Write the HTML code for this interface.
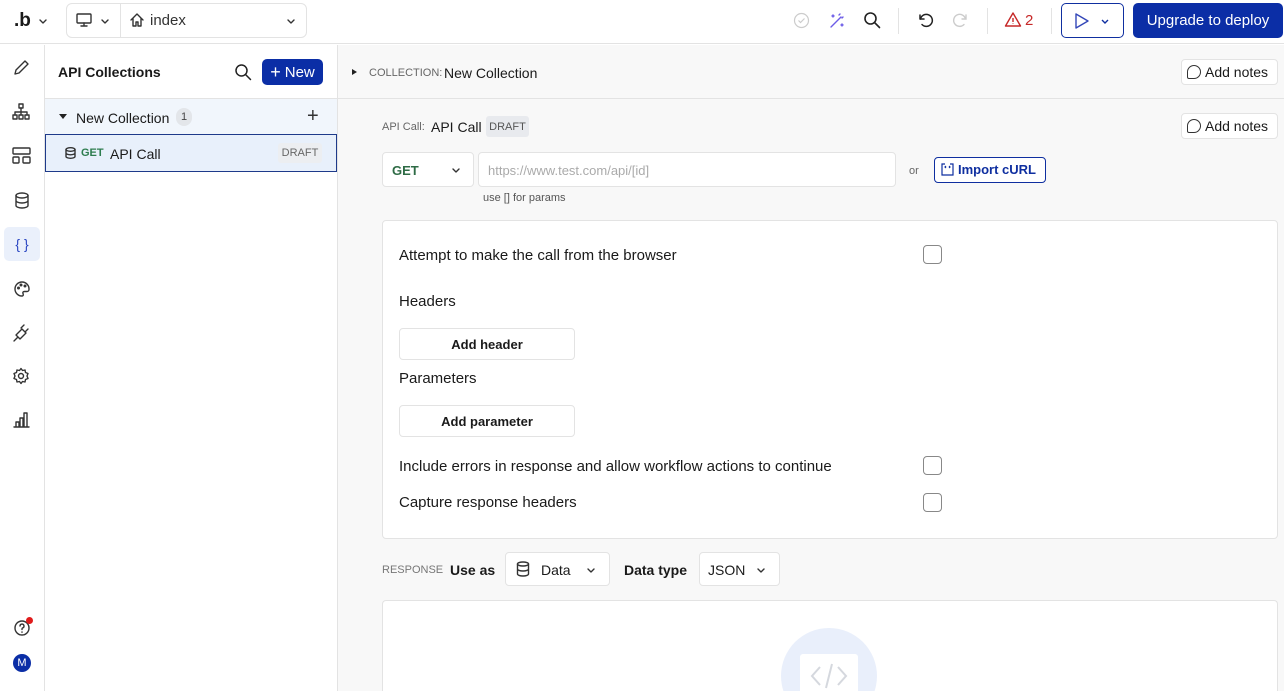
<!DOCTYPE html>
<html style="overflow:hidden;width:1284px;height:691px"><head><meta charset="utf-8"><style>
*{box-sizing:border-box;margin:0;padding:0}
body{width:1284px;height:691px;overflow:hidden;font-family:"Liberation Sans",sans-serif;color:#1a1a1a;background:#fff;position:relative;font-size:14px}
.a{position:absolute}
.top{left:0;top:0;width:1284px;height:44px;border-bottom:1px solid #e3e3e3;background:#fff}
.rail{left:0;top:45px;width:45px;height:646px;border-right:1px solid #e3e3e3;background:#fff}
.side{left:45px;top:45px;width:293px;height:646px;border-right:1px solid #e3e3e3;background:#fff}
.main{left:338px;top:45px;width:946px;height:646px;background:#f8f8f8;overflow:hidden}
.btn{background:#fff;border:1px solid #e3e3e3;border-radius:4px}
.cb{width:19px;height:19px;border:1.5px solid #888;border-radius:4px;background:#fff}
.fc{display:flex;align-items:center;justify-content:center}
svg{display:block}
.ic{stroke:#333;fill:none;stroke-width:1.4;stroke-linecap:round;stroke-linejoin:round}
</style></head><body>
<div class="a top">
 <div class="a" style="left:14px;top:10px;font-size:19px;font-weight:bold">.b</div>
 <svg class="a ic" style="left:38px;top:16px" width="10" height="10"><path d="M2 4l3 3 3-3"/></svg>
 <div class="a btn" style="left:66px;top:3px;width:241px;height:35px;border-radius:6px"></div>
 <div class="a" style="left:120px;top:4px;width:1px;height:33px;background:#e3e3e3"></div>
 <svg class="a ic" style="left:76px;top:13px" width="16" height="14"><rect x="1" y="1" width="14" height="9" rx="1"/><path d="M5 13h6M8 10v3"/></svg>
 <svg class="a ic" style="left:100px;top:16px" width="10" height="10"><path d="M2 4l3 3 3-3"/></svg>
 <svg class="a ic" style="left:129px;top:12px" width="16" height="16"><path d="M2 8l6-6 6 6M4 6v8h3v-4h2v4h3V6"/></svg>
 <div class="a" style="left:150px;top:12px;font-size:15px;color:#333">index</div>
 <svg class="a ic" style="left:286px;top:16px" width="10" height="10"><path d="M2 4l3 3 3-3"/></svg>
 <svg class="a" style="left:793px;top:12px" width="17" height="17"><circle cx="8.5" cy="8.5" r="7" fill="none" stroke="#ccc" stroke-width="1.2"/><path d="M5.5 8.5l2 2 4-4" fill="none" stroke="#ccc" stroke-width="1.2"/></svg>
 <svg class="a" style="left:828px;top:12px" width="18" height="18"><path d="M3 15l10-10M11 3l1-1M14 6l1-1M5 3v2M4 4h2M14 12v2M13 13h2" fill="none" stroke="#6c5ce7" stroke-width="1.4" stroke-linecap="round"/></svg>
 <svg class="a ic" style="left:863px;top:11px" width="18" height="18"><circle cx="7.5" cy="7.5" r="5.5" stroke="#222" stroke-width="1.6"/><path d="M11.5 11.5l5 5" stroke="#222" stroke-width="1.6"/></svg>
 <div class="a" style="left:898px;top:8px;width:1px;height:26px;background:#e3e3e3"></div>
 <svg class="a ic" style="left:916px;top:11px" width="18" height="18"><path d="M4 4v4h4" stroke="#222" stroke-width="1.5"/><path d="M4.5 8A6 6 0 1 1 6 13.5" stroke="#222" stroke-width="1.5"/></svg>
 <svg class="a" style="left:952px;top:11px" width="18" height="18"><path d="M14 4v4h-4M13.5 8A6 6 0 1 0 12 13.5" fill="none" stroke="#ccc" stroke-width="1.4" stroke-linecap="round"/></svg>
 <div class="a" style="left:987px;top:8px;width:1px;height:26px;background:#e3e3e3"></div>
 <svg class="a" style="left:1004px;top:11px" width="18" height="17"><path d="M9 2L1.5 15h15z M9 7v4M9 12.5v.5" fill="none" stroke="#c62828" stroke-width="1.4" stroke-linejoin="round"/></svg>
 <div class="a" style="left:1025px;top:12px;color:#c62828;font-size:15px">2</div>
 <div class="a" style="left:1051px;top:8px;width:1px;height:26px;background:#e3e3e3"></div>
 <div class="a" style="left:1061px;top:3px;width:63px;height:35px;border:1px solid #0f2fa0;border-radius:5px"></div>
 <svg class="a" style="left:1074px;top:12px" width="16" height="18"><path d="M2 2l12 7-12 7z" fill="none" stroke="#3346b8" stroke-width="1.4" stroke-linejoin="round"/></svg>
 <svg class="a" style="left:1100px;top:16px" width="10" height="10"><path d="M2 4l3 3 3-3" fill="none" stroke="#0f2fa0" stroke-width="1.4"/></svg>
 <div class="a fc" style="left:1133px;top:3px;width:150px;height:35px;background:#0b2ea6;border-radius:5px;color:#fff;font-size:15px">Upgrade to deploy</div>
</div>
<div class="a rail">
 <svg class="a ic" style="left:12px;top:14px" width="18" height="18"><path d="M3 15l1-4 9-9 3 3-9 9z"/></svg>
 <svg class="a ic" style="left:12px;top:58px" width="18" height="18"><rect x="7" y="1" width="4" height="4"/><rect x="1" y="12" width="4" height="4"/><rect x="7" y="12" width="4" height="4"/><rect x="13" y="12" width="4" height="4"/><path d="M9 5v7M3 12V9h12v3"/></svg>
 <svg class="a ic" style="left:12px;top:102px" width="19" height="18"><rect x="1" y="1" width="17" height="6" rx="1"/><rect x="1" y="10" width="6" height="6" rx="1"/><rect x="11" y="10" width="7" height="6" rx="1"/></svg>
 <svg class="a ic" style="left:14px;top:147px" width="16" height="17"><ellipse cx="8" cy="3.5" rx="6" ry="2.5"/><path d="M2 3.5v10c0 1.4 2.7 2.5 6 2.5s6-1.1 6-2.5v-10M2 8.5c0 1.4 2.7 2.5 6 2.5s6-1.1 6-2.5"/></svg>
 <div class="a fc" style="left:4px;top:182px;width:36px;height:34px;background:#eaf0fb;border-radius:5px;color:#2b47c2;font-size:14px">{ }</div>
 <svg class="a ic" style="left:13px;top:235px" width="18" height="18"><path d="M9 2a7 7 0 1 0 0 14c1.5 0 1.5-1.5 1-2.5s0-2 1.5-2H14a2 2 0 0 0 2-2A7 7 0 0 0 9 2z"/><circle cx="5.5" cy="8" r=".8"/><circle cx="8" cy="5" r=".8"/><circle cx="12" cy="6" r=".8"/></svg>
 <svg class="a ic" style="left:12px;top:278px" width="18" height="20"><path d="M2 18l4-4M6 14l-2-2 6-6 4 4-6 6zM9 5l3-3M13 9l3-3"/></svg>
 <svg class="a ic" style="left:12px;top:322px" width="18" height="18"><circle cx="9" cy="9" r="2.5"/><path d="M9 1.5l1.5 2 2.5-.5.5 2.5 2.5 1-1 2.5 1 2.5-2.5 1-.5 2.5-2.5-.5L9 16.5l-1.5-2-2.5.5-.5-2.5-2.5-1 1-2.5-1-2.5 2.5-1 .5-2.5 2.5.5z"/></svg>
 <svg class="a ic" style="left:13px;top:366px" width="17" height="17"><path d="M1 16h15M3 16v-5h3v5M7 16V7h3v9M11 16V2h3v14"/></svg>
 <svg class="a ic" style="left:13px;top:574px" width="18" height="18"><circle cx="9" cy="9" r="7"/><path d="M7 7a2 2 0 1 1 2.5 2c-.5.2-.5.8-.5 1.5M9 13v.3"/></svg>
 <div class="a" style="left:26px;top:572px;width:7px;height:7px;border-radius:50%;background:#e01b1b"></div>
 <div class="a fc" style="left:13px;top:609px;width:18px;height:18px;border-radius:50%;background:#0b2ea6;color:#fff;font-size:11px">M</div>
</div>
<div class="a side">
 <div class="a" style="left:13px;top:19px;font-size:14px;font-weight:bold">API Collections</div>
 <svg class="a ic" style="left:189px;top:18px" width="18" height="18"><circle cx="7.5" cy="7.5" r="5.5" stroke="#222" stroke-width="1.5"/><path d="M11.5 11.5l5 5" stroke="#222" stroke-width="1.5"/></svg>
 <div class="a fc" style="left:217px;top:14px;width:61px;height:26px;background:#0b2ea6;border-radius:5px;color:#fff;font-size:15px"><span style="font-size:18px;margin-right:4px;font-weight:300">+</span>New</div>
 <div class="a" style="left:0;top:53px;width:292px;height:36px;background:#f1f6fc;border-top:1px solid #e3e3e3"></div>
 <div class="a" style="left:14px;top:69px;width:0;height:0;border-left:4px solid transparent;border-right:4px solid transparent;border-top:5px solid #222"></div>
 <div class="a" style="left:31px;top:65px;font-size:14px">New Collection</div>
 <div class="a fc" style="left:131px;top:63px;width:16px;height:18px;border-radius:8px;background:#e3e6ea;font-size:11px;color:#444">1</div>
 <div class="a" style="left:262px;top:60px;font-size:20px;color:#333;font-weight:300">+</div>
 <div class="a" style="left:0;top:89px;width:292px;height:38px;background:#e8f0fb;border:1px solid #1e3a8a"></div>
 <svg class="a ic" style="left:20px;top:102px" width="11" height="12"><ellipse cx="5.5" cy="2.5" rx="4.5" ry="1.8"/><path d="M1 2.5v7c0 1 2 1.8 4.5 1.8s4.5-.8 4.5-1.8v-7M1 6c0 1 2 1.8 4.5 1.8S10 7 10 6"/></svg>
 <div class="a" style="left:36px;top:102px;font-size:11px;font-weight:bold;color:#2e7d4f">GET</div>
 <div class="a" style="left:65px;top:101px;font-size:14px">API Call</div>
 <div class="a fc" style="left:233px;top:98px;width:44px;height:20px;background:#eceef1;border-radius:3px;font-size:11px;color:#666">DRAFT</div>
</div>
<div class="a main">
 <div class="a" style="left:0;top:0;width:946px;height:54px;border-bottom:1px solid #e3e3e3"></div>
 <div class="a" style="left:14px;top:24px;width:0;height:0;border-top:3.5px solid transparent;border-bottom:3.5px solid transparent;border-left:5px solid #222"></div>
 <div class="a" style="left:31px;top:22px;font-size:11px;color:#666">COLLECTION:</div>
 <div class="a" style="left:106px;top:20px;font-size:14px">New Collection</div>
 <div class="a btn" style="left:843px;top:14px;width:97px;height:26px"></div>
 <div class="a btn" style="left:843px;top:68px;width:97px;height:26px"></div>
 <div class="a" style="left:849px;top:18px;font-size:14px;line-height:18px"><span style="display:inline-block;width:14px;height:14px;border:1.4px solid #333;border-radius:50% 50% 50% 2px;vertical-align:-2px;margin-right:4px"></span>Add notes</div>
 <div class="a" style="left:849px;top:72px;font-size:14px;line-height:18px"><span style="display:inline-block;width:14px;height:14px;border:1.4px solid #333;border-radius:50% 50% 50% 2px;vertical-align:-2px;margin-right:4px"></span>Add notes</div>
 <div class="a" style="left:44px;top:76px;font-size:11px;color:#666">API Call:</div>
 <div class="a" style="left:93px;top:74px;font-size:14px">API Call</div>
 <div class="a fc" style="left:148px;top:71px;width:43px;height:21px;background:#e8eaee;border-radius:3px;font-size:11px;color:#555">DRAFT</div>
 <div class="a btn" style="left:44px;top:107px;width:92px;height:35px"></div>
 <div class="a" style="left:54px;top:118px;font-size:13px;font-weight:bold;color:#2e6b45">GET</div>
 <svg class="a ic" style="left:113px;top:120px" width="10" height="10"><path d="M2 4l3 3 3-3"/></svg>
 <div class="a btn" style="left:140px;top:107px;width:418px;height:35px"></div>
 <div class="a" style="left:150px;top:118px;font-size:13px;color:#aaa">https://www.test.com/api/[id]</div>
 <div class="a" style="left:145px;top:147px;font-size:11px;color:#555">use [] for params</div>
 <div class="a" style="left:571px;top:120px;font-size:11px;color:#666">or</div>
 <div class="a" style="left:596px;top:112px;width:112px;height:26px;border:1px solid #0f2fa0;border-radius:4px;background:#fff;color:#0f2fa0;font-size:13px;font-weight:bold;line-height:24px;padding-left:23px">Import cURL</div>
 <svg class="a" style="left:603px;top:118px" width="13" height="13"><path d="M4 1H1v11h11V1H9M5 3L4 4l1 1M8 3l1 1-1 1" fill="none" stroke="#0f2fa0" stroke-width="1.2"/></svg>
 <div class="a btn" style="left:44px;top:175px;width:896px;height:319px"></div>
 <div class="a" style="left:61px;top:202px;font-size:15px">Attempt to make the call from the browser</div>
 <div class="a cb" style="left:585px;top:200px"></div>
 <div class="a" style="left:61px;top:248px;font-size:15px">Headers</div>
 <div class="a btn fc" style="left:61px;top:283px;width:176px;height:32px;font-size:13px;font-weight:bold">Add header</div>
 <div class="a" style="left:61px;top:325px;font-size:15px">Parameters</div>
 <div class="a btn fc" style="left:61px;top:360px;width:176px;height:32px;font-size:13px;font-weight:bold">Add parameter</div>
 <div class="a" style="left:61px;top:413px;font-size:15px">Include errors in response and allow workflow actions to continue</div>
 <div class="a cb" style="left:585px;top:411px"></div>
 <div class="a" style="left:61px;top:449px;font-size:15px">Capture response headers</div>
 <div class="a cb" style="left:585px;top:448px"></div>
 <div class="a" style="left:44px;top:519px;font-size:11px;color:#777">RESPONSE</div>
 <div class="a" style="left:112px;top:517px;font-size:14px;font-weight:bold">Use as</div>
 <div class="a btn" style="left:167px;top:507px;width:105px;height:34px"></div>
 <svg class="a ic" style="left:178px;top:516px" width="14" height="16"><ellipse cx="7" cy="3" rx="5.5" ry="2"/><path d="M1.5 3v10c0 1.1 2.5 2 5.5 2s5.5-.9 5.5-2V3M1.5 8c0 1.1 2.5 2 5.5 2s5.5-.9 5.5-2"/></svg>
 <div class="a" style="left:203px;top:517px;font-size:14px">Data</div>
 <svg class="a ic" style="left:248px;top:520px" width="10" height="10"><path d="M2 4l3 3 3-3"/></svg>
 <div class="a" style="left:286px;top:517px;font-size:14px;font-weight:bold">Data type</div>
 <div class="a btn" style="left:361px;top:507px;width:81px;height:34px"></div>
 <div class="a" style="left:370px;top:517px;font-size:14px">JSON</div>
 <svg class="a ic" style="left:418px;top:520px" width="10" height="10"><path d="M2 4l3 3 3-3"/></svg>
 <div class="a" style="left:44px;top:555px;width:896px;height:91px;background:#fff;border:1px solid #e3e3e3;border-bottom:none;border-radius:4px 4px 0 0;overflow:hidden">
  <div class="a" style="left:398px;top:27px;width:96px;height:96px;border-radius:50%;background:#e9effb"></div>
  <div class="a" style="left:417px;top:53px;width:58px;height:50px;background:#fff;border-radius:3px"></div>
  <svg class="a" style="left:425px;top:60px" width="42" height="30"><path d="M12 6l-8 9 8 9M30 6l8 9-8 9M24 3l-6 24" fill="none" stroke="#d5d8de" stroke-width="2"/></svg>
 </div>
</div>
</body></html>
